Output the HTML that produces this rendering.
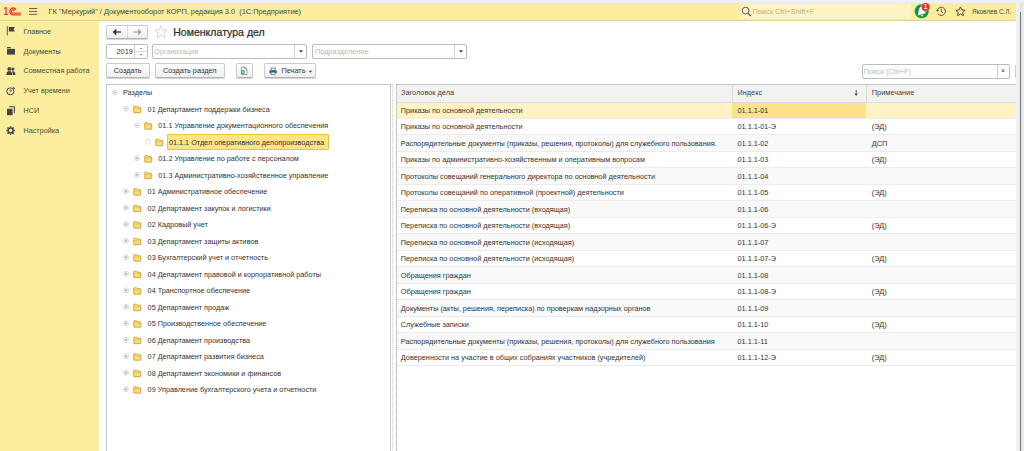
<!DOCTYPE html>
<html lang="ru"><head><meta charset="utf-8"><title>Номенклатура дел</title>
<style>
*{box-sizing:border-box;margin:0;padding:0}
html,body{width:1024px;height:451px;overflow:hidden;background:#fff}
body{font-family:"Liberation Sans",Arial,sans-serif;font-size:7.35px;color:#333;position:relative}
.abs{position:absolute}
.t{position:absolute;white-space:nowrap;line-height:10px;height:10px}
#topstrip{left:0;top:0;width:1024px;height:3px;background:#eef0f7}
#rstrip{z-index:5;left:1015.6px;top:3px;width:9px;height:448px;background:linear-gradient(90deg,#f3f3f3 0,#ececec 3.5px,#e2e2e2 4.300px,#e6e6e6 6px,#f0f0f0 9px)}
#rline{z-index:6;left:1019.9px;top:12px;width:1.200px;height:439px;background:#767676}
#hdr{left:0;top:3px;width:1015.6px;height:17.5px;background:#fbed9e;border-bottom:1px solid #dfd393}
#side{left:0;top:21px;width:99px;height:430px;background:#fbed9e}
.btn{position:absolute;border:1px solid #cbcbcb;border-bottom-color:#b4b4b4;border-radius:2px;background:linear-gradient(#ffffff,#eeeeee);box-shadow:0 1px 1px rgba(0,0,0,.18);text-align:center;line-height:13px;white-space:nowrap;color:#333}
.inp{position:absolute;border:1px solid #bcbcbc;border-radius:2px;background:#fff;height:15px}
.ph{color:#b8b8b8}
.tr{font-size:7.25px}
.tb{font-size:7.3px}
.panel{position:absolute;border:1px solid #c6c6c6;background:#fff}
.row{position:absolute;left:0;width:100%}
</style></head><body>
<div id="topstrip" class="abs"></div>
<div id="hdr" class="abs"></div>
<div id="side" class="abs"></div>
<div id="rstrip" class="abs"></div>
<div id="rline" class="abs"></div>
<div class="t" style="left:48.500px;top:6.500px;font-size:7.380px;color:#4a4a3a">ГК "Меркурий" / Документооборот КОРП, редакция 3.0&nbsp; (1С:Предприятие)</div>
<div class="abs" style="left:740px;top:4px;width:171px;height:14.5px;background:#fdf4c4;border-radius:2px"></div>
<div class="t" style="left:752.5px;top:6.5px;color:#b9b38a">Поиск Ctrl+Shift+F</div>
<div class="t" style="left:972px;top:7px;font-size:6.45px;color:#4a4a3a">Яковлев С.Л.</div>
<div class="t" style="left:23.5px;top:27.00px;color:#4a4a3a;font-size:7.23px">Главное</div>
<div class="t" style="left:23.5px;top:46.50px;color:#4a4a3a;font-size:7.23px">Документы</div>
<div class="t" style="left:23.5px;top:66.00px;color:#4a4a3a;font-size:7.23px">Совместная работа</div>
<div class="t" style="left:23.5px;top:85.50px;color:#4a4a3a;font-size:7.23px">Учет времени</div>
<div class="t" style="left:23.5px;top:105.50px;color:#4a4a3a;font-size:7.23px">НСИ</div>
<div class="t" style="left:23.5px;top:126.00px;color:#4a4a3a;font-size:7.23px">Настройка</div>
<div class="btn" style="left:106px;top:25px;width:42px;height:14px"></div>
<div class="abs" style="left:127px;top:26px;width:1px;height:12px;background:#dadada"></div>
<div class="t" id="title" style="left:173.2px;top:25.200px;font-size:10.55px;line-height:14px;height:14px;color:#2c2c2c;font-weight:normal;-webkit-text-stroke:0.220px #2c2c2c">Номенклатура дел</div>
<div class="inp" style="left:106px;top:44px;width:42px"></div>
<div class="abs" style="left:134px;top:45px;width:1px;height:13px;background:#cfcfcf"></div>
<div class="abs" style="left:135px;top:51px;width:12px;height:1px;background:#dcdcdc"></div>
<div class="t" style="left:116.5px;top:46.5px;color:#333">2019</div>
<div class="inp" style="left:152px;top:44px;width:155px"></div>
<div class="abs" style="left:294px;top:45px;width:1px;height:13px;background:#cfcfcf"></div>
<div class="t ph" style="left:154px;top:46.5px">Организация</div>
<div class="inp" style="left:312.3px;top:44px;width:155px"></div>
<div class="abs" style="left:454px;top:45px;width:1px;height:13px;background:#cfcfcf"></div>
<div class="t ph" style="left:315px;top:46.5px">Подразделение</div>
<div class="btn" style="left:106px;top:63px;width:43.5px;height:15px;line-height:14.500px">Создать</div>
<div class="btn" style="left:155px;top:63px;width:69.5px;height:15px;line-height:14.500px">Создать раздел</div>
<div class="btn" style="left:236px;top:63px;width:16.500px;height:15px"></div>
<div class="btn" style="left:264px;top:63px;width:52px;height:15px"></div>
<div class="t" style="left:281.5px;top:66px;color:#333">Печать</div>
<div class="inp" style="left:862px;top:64px;width:147.5px;height:14.5px"></div>
<div class="abs" style="left:997px;top:65px;width:1px;height:12.5px;background:#cfcfcf"></div>
<div class="t ph" style="left:863.500px;top:66.500px;font-size:7.350px">Поиск (Ctrl+F)</div>
<div class="t" style="left:1001px;top:66px;font-size:7px;color:#444">×</div>
<div class="abs" style="left:1014.8px;top:64.5px;width:1px;height:13.5px;background:#cfcfcf"></div>
<div class="panel" style="left:106px;top:84px;width:284.7px;height:380px"></div><div class="abs" style="left:392.3px;top:84px;width:0;height:370px;border-left:1px dotted #cfcfcf"></div>
<div class="t tr" style="left:123.00px;top:88.30px">Разделы</div>
<div class="t tr" style="left:147.60px;top:104.80px">01 Департамент поддержки бизнеса</div>
<div class="t tr" style="left:158.30px;top:121.30px">01.1 Управление документационного обеспечения</div>
<div class="abs" style="left:166.5px;top:134.20000000000002px;width:162.5px;height:16.3px;background:#fde486;border:1px solid #edc233;border-radius:1px"></div>
<div class="t tr" style="left:169.00px;top:137.80px">01.1.1 Отдел оперативного делопроизводства</div>
<div class="t tr" style="left:158.30px;top:154.30px">01.2 Управление по работе с персоналом</div>
<div class="t tr" style="left:158.30px;top:170.80px">01.3 Административно-хозяйственное управление</div>
<div class="t tr" style="left:147.60px;top:187.30px">01 Административное обеспечение</div>
<div class="t tr" style="left:147.60px;top:203.80px">02 Департамент закупок и логистики</div>
<div class="t tr" style="left:147.60px;top:220.30px">02 Кадровый учет</div>
<div class="t tr" style="left:147.60px;top:236.80px">03 Департамент защиты активов</div>
<div class="t tr" style="left:147.60px;top:253.30px">03 Бухгалтерский учет и отчетность</div>
<div class="t tr" style="left:147.60px;top:269.80px">04 Департамент правовой и корпоративной работы</div>
<div class="t tr" style="left:147.60px;top:286.30px">04 Транспортное обеспечение</div>
<div class="t tr" style="left:147.60px;top:302.80px">05 Департамент продаж</div>
<div class="t tr" style="left:147.60px;top:319.30px">05 Производственное обеспечение</div>
<div class="t tr" style="left:147.60px;top:335.80px">06 Департамент производства</div>
<div class="t tr" style="left:147.60px;top:352.30px">07 Департамент развития бизнеса</div>
<div class="t tr" style="left:147.60px;top:368.80px">08 Департамент экономики и финансов</div>
<div class="t tr" style="left:147.60px;top:385.30px">09 Управление бухгалтерского учета и отчетности</div>
<div class="panel" style="left:395.5px;top:84px;width:640px;height:380px"></div>
<div class="abs" style="left:396.5px;top:85px;width:630px;height:17.6px;background:#f2f2f2;border-bottom:1px solid #dedede"></div>
<div class="abs" style="left:732px;top:85px;width:1px;height:17.6px;background:#dcdcdc"></div>
<div class="abs" style="left:865.7px;top:85px;width:1px;height:17.6px;background:#dcdcdc"></div>
<div class="t" style="left:401px;top:88px;color:#444">Заголовок дела</div>
<div class="t" style="left:737.5px;top:88px;color:#444">Индекс</div>
<div class="t" style="left:871.800px;top:88px;color:#444">Примечание</div>
<div class="abs" style="left:396.5px;top:102.50px;width:630px;height:16.49px;background:#fff3c6;border-bottom:1px solid #ececec"></div>
<div class="abs" style="left:732px;top:102.50px;width:134px;height:15.989999999999998px;background:#fde28a"></div>
<div class="t tb" style="left:400.8px;top:105.84px">Приказы по основной деятельности</div>
<div class="t tb" style="left:737.5px;top:105.84px">01.1.1-01</div>
<div class="abs" style="left:396.5px;top:118.99px;width:630px;height:16.49px;background:#ffffff;border-bottom:1px solid #ececec"></div>
<div class="t tb" style="left:400.8px;top:122.33px">Приказы по основной деятельности</div>
<div class="t tb" style="left:737.5px;top:122.33px">01.1.1-01-Э</div>
<div class="t" style="left:871.800px;top:122.33px">(ЭД)</div>
<div class="abs" style="left:396.5px;top:135.48px;width:630px;height:16.49px;background:#f9f9f9;border-bottom:1px solid #ececec"></div>
<div class="t tb" style="left:400.8px;top:138.82px">Распорядительные документы (приказы, решения, протоколы) для служебного пользования.</div>
<div class="t tb" style="left:737.5px;top:138.82px">01.1.1-02</div>
<div class="t" style="left:871.800px;top:138.82px">ДСП</div>
<div class="abs" style="left:396.5px;top:151.97px;width:630px;height:16.49px;background:#ffffff;border-bottom:1px solid #ececec"></div>
<div class="t tb" style="left:400.8px;top:155.31px">Приказы по административно-хозяйственным и оперативным вопросам</div>
<div class="t tb" style="left:737.5px;top:155.31px">01.1.1-03</div>
<div class="t" style="left:871.800px;top:155.31px">(ЭД)</div>
<div class="abs" style="left:396.5px;top:168.46px;width:630px;height:16.49px;background:#f9f9f9;border-bottom:1px solid #ececec"></div>
<div class="t tb" style="left:400.8px;top:171.80px">Протоколы совещаний генерального директора по основной деятельности</div>
<div class="t tb" style="left:737.5px;top:171.80px">01.1.1-04</div>
<div class="abs" style="left:396.5px;top:184.95px;width:630px;height:16.49px;background:#ffffff;border-bottom:1px solid #ececec"></div>
<div class="t tb" style="left:400.8px;top:188.29px">Протоколы совещаний по оперативной (проектной) деятельности</div>
<div class="t tb" style="left:737.5px;top:188.29px">01.1.1-05</div>
<div class="t" style="left:871.800px;top:188.29px">(ЭД)</div>
<div class="abs" style="left:396.5px;top:201.44px;width:630px;height:16.49px;background:#f9f9f9;border-bottom:1px solid #ececec"></div>
<div class="t tb" style="left:400.8px;top:204.78px">Переписка по основной деятельности (входящая)</div>
<div class="t tb" style="left:737.5px;top:204.78px">01.1.1-06</div>
<div class="abs" style="left:396.5px;top:217.93px;width:630px;height:16.49px;background:#ffffff;border-bottom:1px solid #ececec"></div>
<div class="t tb" style="left:400.8px;top:221.28px">Переписка по основной деятельности (входящая)</div>
<div class="t tb" style="left:737.5px;top:221.28px">01.1.1-06-Э</div>
<div class="t" style="left:871.800px;top:221.28px">(ЭД)</div>
<div class="abs" style="left:396.5px;top:234.42px;width:630px;height:16.49px;background:#f9f9f9;border-bottom:1px solid #ececec"></div>
<div class="t tb" style="left:400.8px;top:237.76px">Переписка по основной деятельности (исходящая)</div>
<div class="t tb" style="left:737.5px;top:237.76px">01.1.1-07</div>
<div class="abs" style="left:396.5px;top:250.91px;width:630px;height:16.49px;background:#ffffff;border-bottom:1px solid #ececec"></div>
<div class="t tb" style="left:400.8px;top:254.25px">Переписка по основной деятельности (исходящая)</div>
<div class="t tb" style="left:737.5px;top:254.25px">01.1.1-07-Э</div>
<div class="t" style="left:871.800px;top:254.25px">(ЭД)</div>
<div class="abs" style="left:396.5px;top:267.40px;width:630px;height:16.49px;background:#f9f9f9;border-bottom:1px solid #ececec"></div>
<div class="t tb" style="left:400.8px;top:270.75px">Обращения граждан</div>
<div class="t tb" style="left:737.5px;top:270.75px">01.1.1-08</div>
<div class="abs" style="left:396.5px;top:283.89px;width:630px;height:16.49px;background:#ffffff;border-bottom:1px solid #ececec"></div>
<div class="t tb" style="left:400.8px;top:287.24px">Обращения граждан</div>
<div class="t tb" style="left:737.5px;top:287.24px">01.1.1-08-Э</div>
<div class="t" style="left:871.800px;top:287.24px">(ЭД)</div>
<div class="abs" style="left:396.5px;top:300.38px;width:630px;height:16.49px;background:#f9f9f9;border-bottom:1px solid #ececec"></div>
<div class="t tb" style="left:400.8px;top:303.73px">Документы (акты, решения, переписка) по проверкам надзорных органов</div>
<div class="t tb" style="left:737.5px;top:303.73px">01.1.1-09</div>
<div class="abs" style="left:396.5px;top:316.87px;width:630px;height:16.49px;background:#ffffff;border-bottom:1px solid #ececec"></div>
<div class="t tb" style="left:400.8px;top:320.22px">Служебные записки</div>
<div class="t tb" style="left:737.5px;top:320.22px">01.1.1-10</div>
<div class="t" style="left:871.800px;top:320.22px">(ЭД)</div>
<div class="abs" style="left:396.5px;top:333.36px;width:630px;height:16.49px;background:#f9f9f9;border-bottom:1px solid #ececec"></div>
<div class="t tb" style="left:400.8px;top:336.71px">Распорядительные документы (приказы, решения, протоколы) для служебного пользования</div>
<div class="t tb" style="left:737.5px;top:336.71px">01.1.1-11</div>
<div class="abs" style="left:396.5px;top:349.85px;width:630px;height:16.49px;background:#ffffff;border-bottom:1px solid #ececec"></div>
<div class="t tb" style="left:400.8px;top:353.19px">Доверенности на участие в общих собраниях участников (учредителей)</div>
<div class="t tb" style="left:737.5px;top:353.19px">01.1.1-12-Э</div>
<div class="t" style="left:871.800px;top:353.19px">(ЭД)</div>
<svg class="abs" style="left:0;top:0;pointer-events:none" width="1024" height="451" viewBox="0 0 1024 451">
<g transform="translate(0 0)">
<text transform="translate(3.400 15.300) scale(0.780 1)" font-family="Liberation Sans, sans-serif" font-weight="bold" font-size="11.300" fill="#e2412f">1</text>
<path d="M16.100 9.500A3.450 3.450 0 1 0 13 14.900H20.800" stroke="#e2412f" stroke-width="1.400" fill="none"/>
<path d="M14.600 10.700A1.700 1.700 0 1 0 13 13.100H20.800" stroke="#e2412f" stroke-width="1.300" fill="none"/>
</g>
<g transform="translate(29 7)"><path d="M0 1.5h8.200M0 4.400h8.200M0 7.350h8.200" stroke="#5e5a40" stroke-width="0.950" fill="none"/></g>
<g transform="translate(741 6)"><circle cx="4.6" cy="4.6" r="3.4" stroke="#444" stroke-width="0.9" fill="none"/><path d="M7.1 7.3l2.6 2.8" stroke="#444" stroke-width="1.1"/></g>
<g transform="translate(913 2)">
<circle cx="8.7" cy="9.2" r="7" fill="#12934b"/>
<path d="M7.7 4.9c.7-.1 1.300.3 1.800 1.100l3.300 5.300-8.100 2.100 1.300-5.600c.3-1.500.8-2.700 1.700-2.900z" fill="#fff"/>
<path d="M7.6 13.6l2.600-.7c.1.800-.4 1.400-1.100 1.500-.700.100-1.300-.200-1.500-.800z" fill="#fff"/>
<circle cx="12.6" cy="4.9" r="4.400" fill="#fdf3d0"/>
<circle cx="12.6" cy="4.9" r="3.950" fill="#ee2326"/>
<text x="12.500" y="7.250" text-anchor="middle" font-family="Liberation Sans, sans-serif" font-weight="bold" font-size="6.600" fill="#fff">1</text>
</g>
<g transform="translate(936 6)"><path d="M1.170 4.940A4.100 4.100 0 1 1 2.110 7.940" stroke="#45453a" stroke-width="0.900" fill="none"/><path d="M0.500 3.900L1.300 5.200 2.600 4.300" stroke="#45453a" stroke-width="0.900" fill="none"/><path d="M5.250 2.700v2.800l1.700 1.400" stroke="#45453a" stroke-width="0.900" fill="none"/></g>
<g transform="translate(955 6)"><path d="M5.5 0.9l1.4 3 3.2.4-2.4 2.2.7 3.2-2.9-1.7-2.9 1.7.7-3.2L.9 4.3l3.2-.4z" stroke="#45453a" stroke-width="0.950" fill="none" stroke-linejoin="round"/></g>
<g transform="translate(6 26.2)"><path d="M1.300 0v9.200" stroke="#444" stroke-width="0.900" fill="none"/><path d="M2.800 0.800h6.100l-1.300 2.300 1.300 2.300H2.800z" fill="#444"/></g>
<g transform="translate(6 46)"><path d="M1 1.100h3.400l1 1.100h-4.400z" fill="#444"/><path d="M1 2.900h8v5.700H1z" fill="#444"/></g>
<g transform="translate(6 66)"><circle cx="3.300" cy="2.900" r="1.900" fill="#444"/><path d="M0.300 9c0-2.600 1.200-3.900 3-3.900s3 1.300 3 3.900z" fill="#444"/><circle cx="6.900" cy="3.100" r="1.600" fill="#444"/><path d="M5.900 5.300c2.400-.500 3.500.900 3.500 3.700H6.800c0-1.600-.300-2.800-.900-3.700z" fill="#444"/></g>
<g transform="translate(6 85.5)"><circle cx="4.300" cy="5.800" r="3.500" stroke="#444" stroke-width="1" fill="none"/><path d="M4.300 3.900v2.100l1.500-1" stroke="#444" stroke-width="0.900" fill="none"/><path d="M6.900 1.900l1.900 1.300" stroke="#444" stroke-width="1.100"/></g>
<g transform="translate(6 105.5)"><path d="M1 3.300h5.600v6.400H1z" fill="#444"/><path d="M3.100 1.300h5.300v6.300" stroke="#444" stroke-width="1.100" fill="none"/></g>
<g transform="translate(6 126)"><circle cx="4.6" cy="4.6" r="2.500" stroke="#444" stroke-width="1.500" fill="none"/><path d="M7.50 4.60L8.85 4.60M6.65 6.65L7.61 7.61M4.60 7.50L4.60 8.85M2.55 6.65L1.59 7.61M1.70 4.60L0.35 4.60M2.55 2.55L1.59 1.59M4.60 1.70L4.60 0.35M6.65 2.55L7.61 1.59" stroke="#444" stroke-width="1.500"/></g>
<g transform="translate(112.5 28)"><path d="M1 4h7.400" stroke="#333" stroke-width="1.300"/><path d="M3.800 0.600L0.200 4l3.600 3.400z" fill="#333"/></g>
<g transform="translate(132.5 28)"><path d="M0.800 4h7.400" stroke="#a5a5a5" stroke-width="1.200"/><path d="M5.600 0.600L9.200 4 5.600 7.400z" fill="#a5a5a5"/></g>
<g transform="translate(154 25)"><path d="M7 0.8l1.8 3.9 4.2.5-3.1 2.9.9 4.2L7 10.1l-3.8 2.2.9-4.2L1 5.2l4.2-.5z" stroke="#c2c7cf" stroke-width="0.750" fill="none" stroke-linejoin="round"/></g>
<g transform="translate(138.5 46)"><path d="M1.400 2.900l1.100-1.200 1.100 1.200z" fill="#555"/><path d="M1.400 8.100l1.100 1.200 1.100-1.200z" fill="#555"/></g>
<g transform="translate(298 49.5)"><path d="M1 0.8h4L3 3.2z" fill="#444"/></g>
<g transform="translate(458 49.5)"><path d="M1 0.8h4L3 3.2z" fill="#444"/></g>
<g transform="translate(240.2 66.5) scale(0.85 0.85)"><path d="M1.5 0.6h4l2.4 2.3v6.5H1.5z" stroke="#6a7a6a" stroke-width="0.8" fill="#fff"/><path d="M5.4 0.6v2.4h2.4" stroke="#6a7a6a" stroke-width="0.7" fill="none"/><circle cx="3.2" cy="6.6" r="2.4" fill="#2c9a3c"/><path d="M3.2 5.2v2.8M1.8 6.6h2.8" stroke="#fff" stroke-width="0.8"/></g>
<g transform="translate(269 67.6) scale(0.85 0.85)"><rect x="2.4" y="0.5" width="4.8" height="2.6" fill="#fff" stroke="#3b5f8a" stroke-width="0.8"/><rect x="0.5" y="3" width="8.6" height="3.6" rx="0.8" fill="#3b5f8a"/><rect x="2.4" y="5.4" width="4.8" height="2.8" fill="#fff" stroke="#3b5f8a" stroke-width="0.8"/></g>
<g transform="translate(307.4 70)"><path d="M1.200 0.700h3.600L3 2.800z" fill="#444"/></g>
<g transform="translate(112 89.3)"><circle cx="3" cy="3" r="2.450" stroke="#bdbdbd" stroke-width="0.600" fill="#fff"/><path d="M1.700 3h2.600" stroke="#8c8c8c" stroke-width="0.700"/></g>
<g transform="translate(123 105.8)"><circle cx="3" cy="3" r="2.450" stroke="#bdbdbd" stroke-width="0.600" fill="#fff"/><path d="M1.700 3h2.600" stroke="#8c8c8c" stroke-width="0.700"/></g>
<g transform="translate(133 105.3)"><path d="M0.750 1.250c0-.200.100-.300.300-.300h2.500c.200 0 .300.100.400.250l.400.750h3.100c.200 0 .300.100.300.300v4.800c0 .200-.100.300-.300.300H1.050c-.200 0-.300-.100-.300-.300z" fill="#fcdd7c" stroke="#d19828" stroke-width="0.850"/><path d="M1.100 3.300h6.300" stroke="#ddb04c" stroke-width="0.600"/></g>
<g transform="translate(134 122.3)"><circle cx="3" cy="3" r="2.450" stroke="#bdbdbd" stroke-width="0.600" fill="#fff"/><path d="M1.700 3h2.600" stroke="#8c8c8c" stroke-width="0.700"/></g>
<g transform="translate(144 121.8)"><path d="M0.750 1.250c0-.200.100-.300.300-.300h2.500c.200 0 .300.100.400.250l.400.750h3.100c.200 0 .300.100.300.300v4.800c0 .200-.100.300-.300.300H1.050c-.200 0-.300-.100-.300-.300z" fill="#fcdd7c" stroke="#d19828" stroke-width="0.850"/><path d="M1.100 3.300h6.300" stroke="#ddb04c" stroke-width="0.600"/></g>
<g transform="translate(145 138.8)"><circle cx="3" cy="3" r="2.450" stroke="#c4c4c4" stroke-width="0.600" fill="#fff"/></g>
<g transform="translate(155 138.3)"><path d="M0.750 1.250c0-.200.100-.300.300-.300h2.500c.200 0 .300.100.400.250l.400.750h3.100c.200 0 .300.100.300.300v4.800c0 .200-.100.300-.300.300H1.050c-.200 0-.300-.100-.300-.300z" fill="#fcdd7c" stroke="#d19828" stroke-width="0.850"/><path d="M1.100 3.300h6.300" stroke="#ddb04c" stroke-width="0.600"/></g>
<g transform="translate(134 155.3)"><circle cx="3" cy="3" r="2.450" stroke="#bdbdbd" stroke-width="0.600" fill="#fff"/><path d="M1.700 3h2.600M3 1.700v2.600" stroke="#8c8c8c" stroke-width="0.650"/></g>
<g transform="translate(144 154.8)"><path d="M0.750 1.250c0-.200.100-.300.300-.300h2.500c.200 0 .300.100.400.250l.400.750h3.100c.200 0 .300.100.300.300v4.800c0 .200-.100.300-.300.300H1.050c-.200 0-.300-.100-.300-.300z" fill="#fcdd7c" stroke="#d19828" stroke-width="0.850"/><path d="M1.100 3.300h6.300" stroke="#ddb04c" stroke-width="0.600"/></g>
<g transform="translate(134 171.8)"><circle cx="3" cy="3" r="2.450" stroke="#bdbdbd" stroke-width="0.600" fill="#fff"/><path d="M1.700 3h2.600M3 1.700v2.600" stroke="#8c8c8c" stroke-width="0.650"/></g>
<g transform="translate(144 171.3)"><path d="M0.750 1.250c0-.200.100-.300.300-.300h2.500c.200 0 .300.100.400.250l.400.750h3.100c.200 0 .300.100.300.300v4.800c0 .200-.100.300-.300.300H1.050c-.200 0-.300-.100-.300-.300z" fill="#fcdd7c" stroke="#d19828" stroke-width="0.850"/><path d="M1.100 3.300h6.300" stroke="#ddb04c" stroke-width="0.600"/></g>
<g transform="translate(123 188.3)"><circle cx="3" cy="3" r="2.450" stroke="#bdbdbd" stroke-width="0.600" fill="#fff"/><path d="M1.700 3h2.600M3 1.700v2.600" stroke="#8c8c8c" stroke-width="0.650"/></g>
<g transform="translate(133 187.8)"><path d="M0.750 1.250c0-.200.100-.300.300-.300h2.500c.200 0 .300.100.400.250l.400.750h3.100c.200 0 .300.100.300.300v4.800c0 .200-.100.300-.300.300H1.050c-.200 0-.300-.100-.300-.300z" fill="#fcdd7c" stroke="#d19828" stroke-width="0.850"/><path d="M1.100 3.300h6.300" stroke="#ddb04c" stroke-width="0.600"/></g>
<g transform="translate(123 204.8)"><circle cx="3" cy="3" r="2.450" stroke="#bdbdbd" stroke-width="0.600" fill="#fff"/><path d="M1.700 3h2.600M3 1.700v2.600" stroke="#8c8c8c" stroke-width="0.650"/></g>
<g transform="translate(133 204.3)"><path d="M0.750 1.250c0-.200.100-.300.300-.300h2.500c.200 0 .300.100.400.250l.400.750h3.100c.200 0 .300.100.300.300v4.800c0 .200-.100.300-.300.300H1.050c-.200 0-.300-.100-.300-.300z" fill="#fcdd7c" stroke="#d19828" stroke-width="0.850"/><path d="M1.100 3.300h6.300" stroke="#ddb04c" stroke-width="0.600"/></g>
<g transform="translate(123 221.3)"><circle cx="3" cy="3" r="2.450" stroke="#bdbdbd" stroke-width="0.600" fill="#fff"/><path d="M1.700 3h2.600M3 1.700v2.600" stroke="#8c8c8c" stroke-width="0.650"/></g>
<g transform="translate(133 220.8)"><path d="M0.750 1.250c0-.200.100-.300.300-.300h2.500c.200 0 .300.100.400.250l.400.750h3.100c.200 0 .300.100.300.300v4.800c0 .200-.100.300-.300.300H1.050c-.200 0-.300-.100-.300-.300z" fill="#fcdd7c" stroke="#d19828" stroke-width="0.850"/><path d="M1.100 3.300h6.300" stroke="#ddb04c" stroke-width="0.600"/></g>
<g transform="translate(123 237.8)"><circle cx="3" cy="3" r="2.450" stroke="#bdbdbd" stroke-width="0.600" fill="#fff"/><path d="M1.700 3h2.600M3 1.700v2.600" stroke="#8c8c8c" stroke-width="0.650"/></g>
<g transform="translate(133 237.3)"><path d="M0.750 1.250c0-.200.100-.300.300-.300h2.500c.200 0 .300.100.400.250l.400.750h3.100c.200 0 .300.100.300.300v4.800c0 .200-.100.300-.300.300H1.050c-.200 0-.300-.100-.300-.300z" fill="#fcdd7c" stroke="#d19828" stroke-width="0.850"/><path d="M1.100 3.300h6.300" stroke="#ddb04c" stroke-width="0.600"/></g>
<g transform="translate(123 254.3)"><circle cx="3" cy="3" r="2.450" stroke="#bdbdbd" stroke-width="0.600" fill="#fff"/><path d="M1.700 3h2.600M3 1.700v2.600" stroke="#8c8c8c" stroke-width="0.650"/></g>
<g transform="translate(133 253.8)"><path d="M0.750 1.250c0-.200.100-.300.300-.300h2.500c.200 0 .300.100.400.250l.400.750h3.100c.200 0 .300.100.300.300v4.800c0 .200-.100.300-.300.300H1.050c-.200 0-.300-.100-.300-.300z" fill="#fcdd7c" stroke="#d19828" stroke-width="0.850"/><path d="M1.100 3.300h6.300" stroke="#ddb04c" stroke-width="0.600"/></g>
<g transform="translate(123 270.8)"><circle cx="3" cy="3" r="2.450" stroke="#bdbdbd" stroke-width="0.600" fill="#fff"/><path d="M1.700 3h2.600M3 1.700v2.600" stroke="#8c8c8c" stroke-width="0.650"/></g>
<g transform="translate(133 270.3)"><path d="M0.750 1.250c0-.200.100-.300.300-.300h2.500c.200 0 .300.100.400.250l.400.750h3.100c.200 0 .300.100.300.300v4.800c0 .200-.100.300-.300.300H1.050c-.200 0-.300-.100-.300-.300z" fill="#fcdd7c" stroke="#d19828" stroke-width="0.850"/><path d="M1.100 3.300h6.300" stroke="#ddb04c" stroke-width="0.600"/></g>
<g transform="translate(123 287.3)"><circle cx="3" cy="3" r="2.450" stroke="#bdbdbd" stroke-width="0.600" fill="#fff"/><path d="M1.700 3h2.600M3 1.700v2.600" stroke="#8c8c8c" stroke-width="0.650"/></g>
<g transform="translate(133 286.8)"><path d="M0.750 1.250c0-.200.100-.300.300-.300h2.500c.200 0 .300.100.400.250l.400.750h3.100c.200 0 .300.100.300.300v4.800c0 .200-.100.300-.300.300H1.050c-.200 0-.300-.100-.300-.300z" fill="#fcdd7c" stroke="#d19828" stroke-width="0.850"/><path d="M1.100 3.300h6.300" stroke="#ddb04c" stroke-width="0.600"/></g>
<g transform="translate(123 303.8)"><circle cx="3" cy="3" r="2.450" stroke="#bdbdbd" stroke-width="0.600" fill="#fff"/><path d="M1.700 3h2.600M3 1.700v2.600" stroke="#8c8c8c" stroke-width="0.650"/></g>
<g transform="translate(133 303.3)"><path d="M0.750 1.250c0-.200.100-.300.300-.300h2.500c.200 0 .300.100.400.250l.400.750h3.100c.200 0 .300.100.300.300v4.800c0 .200-.100.300-.300.300H1.050c-.200 0-.300-.100-.300-.300z" fill="#fcdd7c" stroke="#d19828" stroke-width="0.850"/><path d="M1.100 3.300h6.300" stroke="#ddb04c" stroke-width="0.600"/></g>
<g transform="translate(123 320.3)"><circle cx="3" cy="3" r="2.450" stroke="#bdbdbd" stroke-width="0.600" fill="#fff"/><path d="M1.700 3h2.600M3 1.700v2.600" stroke="#8c8c8c" stroke-width="0.650"/></g>
<g transform="translate(133 319.8)"><path d="M0.750 1.250c0-.200.100-.300.300-.300h2.500c.200 0 .300.100.400.250l.400.750h3.100c.200 0 .300.100.300.300v4.800c0 .200-.100.300-.300.300H1.050c-.200 0-.300-.100-.300-.300z" fill="#fcdd7c" stroke="#d19828" stroke-width="0.850"/><path d="M1.100 3.300h6.300" stroke="#ddb04c" stroke-width="0.600"/></g>
<g transform="translate(123 336.8)"><circle cx="3" cy="3" r="2.450" stroke="#bdbdbd" stroke-width="0.600" fill="#fff"/><path d="M1.700 3h2.600M3 1.700v2.600" stroke="#8c8c8c" stroke-width="0.650"/></g>
<g transform="translate(133 336.3)"><path d="M0.750 1.250c0-.200.100-.300.300-.300h2.500c.200 0 .300.100.400.250l.400.750h3.100c.200 0 .300.100.300.300v4.800c0 .200-.100.300-.300.300H1.050c-.200 0-.300-.100-.300-.300z" fill="#fcdd7c" stroke="#d19828" stroke-width="0.850"/><path d="M1.100 3.300h6.300" stroke="#ddb04c" stroke-width="0.600"/></g>
<g transform="translate(123 353.3)"><circle cx="3" cy="3" r="2.450" stroke="#bdbdbd" stroke-width="0.600" fill="#fff"/><path d="M1.700 3h2.600M3 1.700v2.600" stroke="#8c8c8c" stroke-width="0.650"/></g>
<g transform="translate(133 352.8)"><path d="M0.750 1.250c0-.200.100-.300.300-.300h2.500c.200 0 .300.100.400.250l.400.750h3.100c.200 0 .300.100.300.300v4.800c0 .200-.100.300-.300.300H1.050c-.200 0-.300-.100-.300-.300z" fill="#fcdd7c" stroke="#d19828" stroke-width="0.850"/><path d="M1.100 3.300h6.300" stroke="#ddb04c" stroke-width="0.600"/></g>
<g transform="translate(123 369.8)"><circle cx="3" cy="3" r="2.450" stroke="#bdbdbd" stroke-width="0.600" fill="#fff"/><path d="M1.700 3h2.600M3 1.700v2.600" stroke="#8c8c8c" stroke-width="0.650"/></g>
<g transform="translate(133 369.3)"><path d="M0.750 1.250c0-.200.100-.300.300-.300h2.500c.200 0 .300.100.400.250l.400.750h3.100c.200 0 .300.100.300.300v4.800c0 .200-.100.300-.300.300H1.050c-.200 0-.300-.100-.300-.300z" fill="#fcdd7c" stroke="#d19828" stroke-width="0.850"/><path d="M1.100 3.300h6.300" stroke="#ddb04c" stroke-width="0.600"/></g>
<g transform="translate(123 386.3)"><circle cx="3" cy="3" r="2.450" stroke="#bdbdbd" stroke-width="0.600" fill="#fff"/><path d="M1.700 3h2.600M3 1.700v2.600" stroke="#8c8c8c" stroke-width="0.650"/></g>
<g transform="translate(133 385.8)"><path d="M0.750 1.250c0-.200.100-.300.300-.300h2.500c.200 0 .300.100.400.250l.400.750h3.100c.200 0 .300.100.300.300v4.800c0 .200-.100.300-.300.300H1.050c-.200 0-.300-.100-.300-.300z" fill="#fcdd7c" stroke="#d19828" stroke-width="0.850"/><path d="M1.100 3.300h6.300" stroke="#ddb04c" stroke-width="0.600"/></g>
<g transform="translate(853.7 89.6)"><path d="M2.500 0.400v5.200M1.200 4.100l1.300 1.600 1.300-1.600" stroke="#333" stroke-width="0.850" fill="none"/></g>
</svg>
</body></html>
